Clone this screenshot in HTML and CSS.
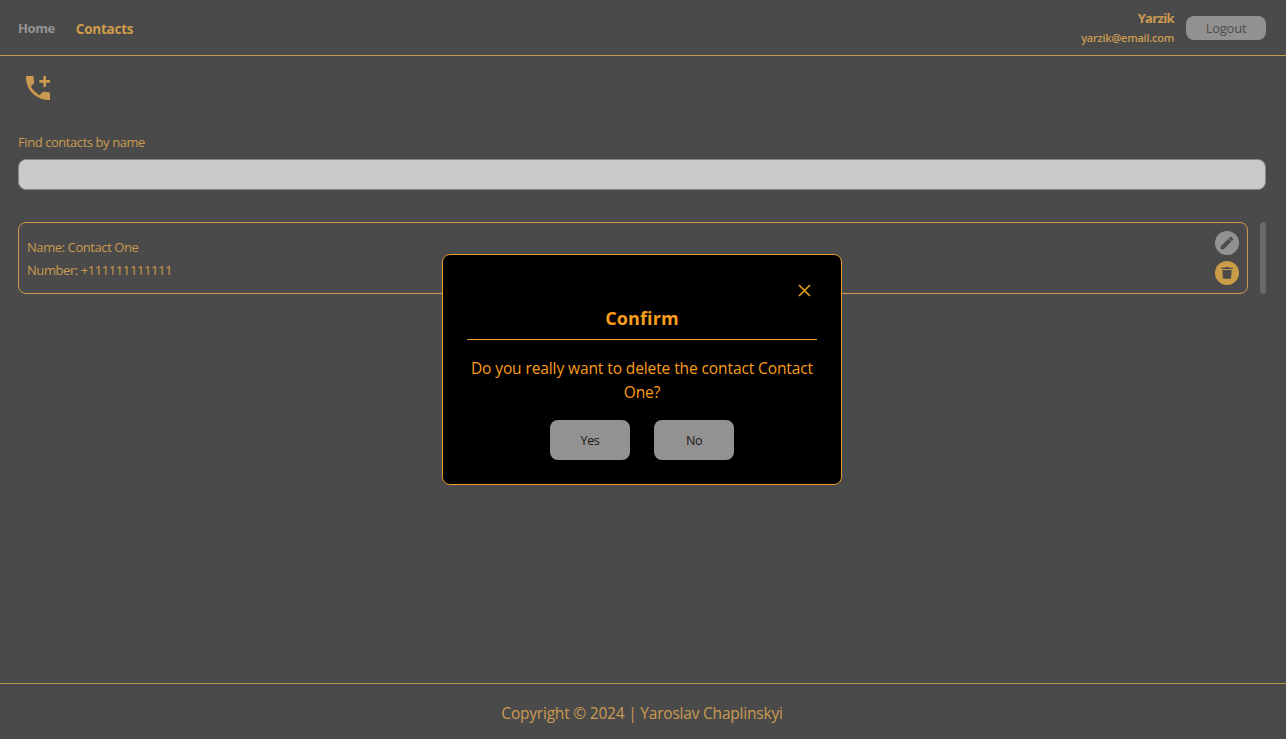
FILE: index.html
```html
<!DOCTYPE html>
<html lang="en">
<head>
<meta charset="utf-8">
<title>Contacts</title>
<link rel="stylesheet" href="styles.css">
</head>
<body>
<div class="page">
  <header class="header">
    <nav class="nav">
      <a class="nav-link">Home</a>
      <a class="nav-link active">Contacts</a>
    </nav>
    <div class="user">
      <div class="user-info">
        <span class="user-name">Yarzik</span>
        <span class="user-email">yarzik@email.com</span>
      </div>
      <button class="logout"><span>Logout</span></button>
    </div>
  </header>
  <main class="main">
    <button class="add" aria-label="Add contact">
      <svg width="32" height="32" viewBox="0 0 24 24" fill="currentColor"><path d="M21 15.46l-5.27-.61-2.52 2.52a15.05 15.05 0 0 1-6.59-6.59l2.53-2.53L8.54 3H3.03C2.45 13.18 10.82 21.55 21 20.97zM21 6h-3V3h-2v3h-3v2h3v3h2V8h3z"/></svg>
    </button>
    <label class="label" for="filter"><span>Find contacts by name</span></label>
    <input class="filter" id="filter" type="text">
    <div class="list">
      <article class="contact">
        <div class="details">
          <p class="contact-name"><span>Name: Contact One</span></p>
          <p class="contact-number"><span>Number: +111111111111</span></p>
        </div>
        <div class="actions">
          <button class="round edit" aria-label="Edit">
            <svg width="16" height="16" viewBox="0 0 24 24" fill="currentColor"><path d="M3 17.25V21h3.75L17.81 9.94l-3.75-3.75zM20.71 7.04a1 1 0 0 0 0-1.41l-2.34-2.34a1 1 0 0 0-1.41 0l-1.83 1.83 3.75 3.75z" stroke="currentColor" stroke-width="1"/></svg>
          </button>
          <button class="round delete" aria-label="Delete">
            <svg width="16" height="16" viewBox="0 0 24 24" fill="currentColor"><path d="M5 7.6h14L18 20.500H6zM20.500 4v2h-17V4h5.200l1-1h4.600l1 1z"/></svg>
          </button>
        </div>
      </article>
      <div class="scrollbar"></div>
    </div>
  </main>
  <footer class="footer"><span>Copyright © 2024 | Yaroslav Chaplinskyi</span></footer>
</div>
<div class="overlay">
  <section class="dialog" role="dialog">
    <button class="close" aria-label="Close">
      <svg width="13" height="13" viewBox="0 0 13 13" fill="none" stroke="currentColor" stroke-width="1.5"><path d="M1 1l11 11M12 1L1 12"/></svg>
    </button>
    <h2 class="title"><span>Confirm</span></h2>
    <p class="message"><span>Do you really want to delete the contact Contact<br>One?</span></p>
    <div class="buttons">
      <button class="choice">Yes</button>
      <button class="choice">No</button>
    </div>
  </section>
</div>
</body>
</html>
```
FILE: styles.css
```css
* { box-sizing: border-box; }
body {
  margin: 0;
  background: #4a4a4a;
  color: #cb9a50;
  font-family: "Segoe UI", "Open Sans", "Noto Sans", sans-serif;
  font-size: 13px;
}
button { border: 0; padding: 0; font: inherit; color: inherit; background: none; }
svg { display: block; }
p, h2 { margin: 0; }
.page { height: 739px; display: flex; flex-direction: column; }
.header {
  height: 56px;
  padding: 0 20px 0 18px;
  display: flex;
  justify-content: space-between;
  align-items: center;
  border-bottom: 1px solid #c09a45;
}
.nav { display: flex; gap: 21px; align-items: center; font-weight: 700; padding-top: 2px; }
.nav-link { color: #949494; font-size: 13px; line-height: 18px; padding-bottom: 2px; letter-spacing: -0.4px; }
.nav-link.active { color: #d09c48; font-size: 13.5px; padding-bottom: 0; letter-spacing: -0.25px; }
.user { display: flex; align-items: center; gap: 12px; }
.user-info { display: flex; flex-direction: column; align-items: flex-end; }
.user-name { font-size: 13px; font-weight: 700; line-height: 20px; letter-spacing: -0.65px; }
.user-email { font-size: 11px; font-weight: 600; line-height: 19px; letter-spacing: -0.23px; }
.logout { width: 80px; height: 24px; border-radius: 8px; background: #919191; color: #4d4d4d; font-size: 13px; letter-spacing: -0.25px; }
.main { flex: 1; padding: 16px 20px 0 18px; display: flex; flex-direction: column; }
.add { align-self: flex-start; padding: 0 4px; height: 32px; }
.label { margin-top: 28px; line-height: 20px; height: 27px; font-size: 13px; letter-spacing: -0.43px; }
.filter { height: 31px; width: 100%; border: 1px solid #868686; border-radius: 8px; background: #cacaca; }
.list { margin-top: 32px; display: flex; gap: 12px; height: 72px; }
.contact {
  flex: 1;
  border: 1px solid #c99a4c;
  border-radius: 8px;
  padding: 8px;
  display: flex;
  justify-content: space-between;
}
.details { padding-top: 5px; line-height: 23px; font-size: 13px; letter-spacing: -0.42px; }
.actions { display: flex; flex-direction: column; gap: 6px; }
.round { width: 24px; height: 24px; border-radius: 50%; display: grid; place-items: center; color: #4a4a4a; }
.edit { background: #929292; }
.delete { background: #c99c4a; }
.scrollbar { width: 6px; border-radius: 3px; background: #696969; }
.footer {
  height: 56px;
  border-top: 1px solid #b99443;
  text-align: center;
  font-size: 15.5px;
  line-height: 58px;
  letter-spacing: -0.21px;
  padding-right: 2px;
}
.overlay { position: absolute; inset: 0 2px 0 0; display: grid; place-items: center; }
.dialog {
  width: 400px;
  height: 231px;
  padding: 24px;
  background: #000;
  color: #f99d1c;
  border: 1px solid #eb9b2c;
  border-radius: 8px;
  display: flex;
  flex-direction: column;
}
.close { align-self: flex-end; width: 24px; height: 24px; padding: 0 1px 1px 0; display: grid; place-items: center; color: #eca41c; }
.title { height: 37px; line-height: 30px; text-align: center; font-size: 18px; letter-spacing: 0.1px; border-bottom: 1px solid #eb9b2c; }
.message { margin-top: 16px; line-height: 24px; text-align: center; font-size: 15.5px; letter-spacing: -0.1px; white-space: nowrap; }
.buttons { margin-top: 16px; display: flex; justify-content: center; gap: 24px; }
.choice { width: 80px; height: 40px; border-radius: 8px; background: #929292; color: #181818; font-size: 12.5px; letter-spacing: -0.4px; }
```
